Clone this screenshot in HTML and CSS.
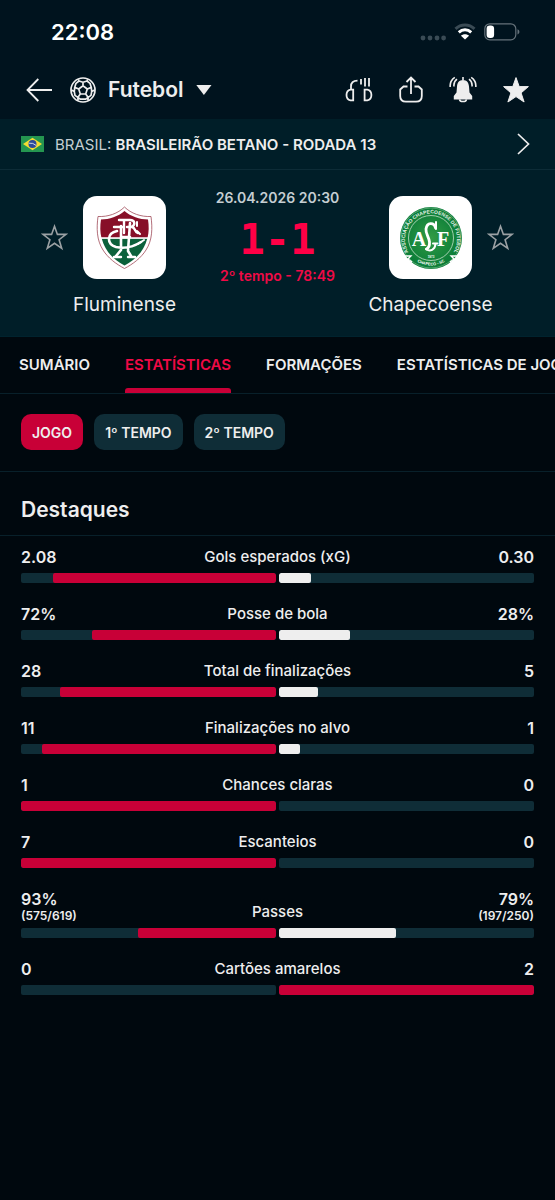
FILE: index.html
```html
<!DOCTYPE html>
<html lang="pt-BR">
<head>
<meta charset="utf-8">
<meta name="viewport" content="width=device-width, initial-scale=1">
<title>Fluminense - Chapecoense</title>
<link rel="stylesheet" href="styles.css">
</head>
<body>
<div class="top">
  <div class="status-bar">
    <span class="clock">22:08</span>
    <div class="status-icons">
      <svg width="26" height="6" viewBox="0 0 26 6" fill="#3a4b55"><circle cx="3" cy="3" r="2.4"/><circle cx="10" cy="3" r="2.4"/><circle cx="17" cy="3" r="2.4"/><circle cx="23.6" cy="3" r="2.4"/></svg>
      <svg class="wifi" width="22" height="17" viewBox="0 0 22 17" fill="none" stroke-width="3"><path d="M1.500 5.800C7 .6 15 .6 20.500 5.800" stroke="#3a4b55"/><path d="M4.800 9.300C8.400 6 13.600 6 17.200 9.300" stroke="#fff"/><path d="M7 12.800C9 10.800 13 10.800 15 12.800L11 16.500Z" fill="#fff"/></svg>
      <svg width="36" height="18" viewBox="0 0 36 18"><rect x=".8" y=".8" width="31" height="16" rx="5" fill="none" stroke="#65727a" stroke-width="1.200"/><rect x="2.600" y="2.600" width="7.500" height="12.400" rx="3.200" fill="#fff"/><path d="M33.500 6.300C36 7.300 36 10.500 33.500 11.500Z" fill="#65727a"/></svg>
    </div>
  </div>
  <header class="app-bar">
    <button class="icon-button" aria-label="Voltar"><svg width="26" height="24" viewBox="0 0 26 24" fill="none" stroke="#eee" stroke-width="1.800"><path d="M12.300 1 1.500 12l10.800 11M1.500 12H26"/></svg></button>
    <button class="sport">
      <svg width="26" height="26" viewBox="0 0 26 26" fill="none" stroke="#eee" stroke-width="1.700" stroke-linejoin="round"><circle cx="13" cy="13" r="12"/><path d="M13 8.800 17.300 12 15.700 17h-5.400L8.700 12ZM13 8.800V5M17.300 12l4-1.600M15.700 17l2.500 3.400M10.300 17l-2.500 3.400M8.700 12l-4-1.600M8.300 2.200 9 4l4 1.200L17 4l.7-1.800M21.300 10.400 20 6.300 17 4M21.300 10.400l.4 4.200 3-1.600M18.200 20.400l2.800-2 .7-3.800M18.200 20.400l-.3 3.300M18.200 20.400 15.500 22.200h-5L7.800 20.400M7.800 20.400 5 18.400l-.7-3.800M7.800 20.400l.3 3.300M4.700 10.400l-.4 4.200-3-1.600M4.700 10.400 6 6.300 9 4"/></svg>
      <span>Futebol</span>
      <svg width="16" height="10" viewBox="0 0 16 10" fill="#eee"><path d="M.3 0h15.200L7.900 10Z"/></svg>
    </button>
    <div class="actions">
      <button class="icon-button" aria-label="Áudio"><svg width="28" height="26" viewBox="0 0 28 26" fill="none" stroke="#eee" stroke-width="1.800"><path d="M8.200 12.600v10.700H5.500C3 22.800 1.500 20.500 1.500 18s1.500-4.900 4-5.400ZM19.600 12.600v10.700h2.700c2.600-.5 4.100-2.800 4.100-5.300s-1.500-4.900-4.100-5.400ZM6 12.600V9.500C6 6 8.200 3.700 12.500 3.700M16 2v5.500M20 1v8.500M24 1v8.500"/></svg></button>
      <button class="icon-button" aria-label="Compartilhar"><svg width="24" height="27" viewBox="0 0 24 27" fill="none" stroke="#eee" stroke-width="1.800"><path d="M8.500 10.500H4.500L1.200 13.500V20C1.200 23.500 3.500 25.700 7 25.700H17C20.500 25.700 22.800 23.500 22.800 20V13.500L19.500 10.500H15.500M12 18V2M7.500 6 12 1.500 16.500 6"/></svg></button>
      <button class="icon-button" aria-label="Notificações"><svg width="28" height="27" viewBox="0 0 28 27" fill="none" stroke="#eee" stroke-width="1.600"><path d="M14 1v3M10.500 23.300C10.900 26.300 17.100 26.300 17.500 23.300M5 10.500C4.600 7.500 5.500 5 8 3.200M1.200 11C.8 7 2.500 3.500 5.800 1.300M23 10.500C23.400 7.500 22.500 5 20 3.200M26.800 11C27.200 7 25.500 3.500 22.200 1.300"/><path d="M14 4C10.200 4 8.200 6.800 8 10.500L7.500 16.500 4.800 20V23.500H23.200V20L20.500 16.500 20 10.500C19.800 6.800 17.800 4 14 4Z" fill="#eee" stroke="none"/></svg></button>
      <button class="icon-button" aria-label="Favorito"><svg width="26" height="26" viewBox="0 0 26 26" fill="#eee" stroke="#eee" stroke-linejoin="round"><path d="M13 .6l3.200 9H25.400l-7.300 6.300 3 9.100L13 19.600 4.900 25l3-9.100L.6 9.600h9.200Z"/></svg></button>
    </div>
  </header>
</div>

<a class="league" href="#">
  <svg class="flag" width="23" height="16" viewBox="0 0 23 16"><path fill="#249650" d="M0 0h23v16H0z"/><path fill="#f5dc32" d="M11.500 1.800 21 8l-9.500 6.200L2 8Z"/><circle cx="11.500" cy="8" r="4" fill="#2b4a9b"/><path d="M7.800 7.200Q12 6.500 15.200 9.500" fill="none" stroke="#cdd8e4"/></svg>
  <span>BRASIL: <strong>BRASILEIRÃO BETANO - RODADA 13</strong></span>
  <svg class="chevron" width="13" height="22" viewBox="0 0 13 22" fill="none" stroke="#eee" stroke-width="1.700"><path d="M1 1l10.500 10L1 21"/></svg>
</a>

<section class="match">
  <button class="icon-button follow" aria-label="Seguir Fluminense"><svg width="27" height="27" viewBox="0 0 27 27" fill="none" stroke="#9ba1a4" stroke-width="1.600"><path d="M13.500 2.300 16.400 10.400H25L18.100 15.700 20.700 24.300 13.500 19.300 6.300 24.300 8.900 15.700 2 10.400H10.600Z"/></svg></button>
  <div class="team">
    <div class="crest">
      <svg width="57" height="64" viewBox="0 0 57 64">
        <path d="M28.500 1C22 7.500 12 11 2 10.500.5 22 .5 34 7 44c5 8 13 14 21.500 18.500C37 58 45 52 50 44c6.500-10 6.500-22 5-33.500C45 11 35 7.500 28.500 1Z" fill="#fff" stroke="#a04a58" stroke-width=".8"/>
        <path d="M28.500 5C22 10.500 13.500 13.500 5 13.500 4 20 4 26 5.500 32h46c1.500-6 1.500-12 .5-18.500C43.500 13.500 35 10.500 28.500 5Z" fill="#870f28"/>
        <path d="M5.700 32.500C9 45 17 53.500 28.500 59.500 40 53.500 48 45 51.300 32.500Z" fill="#0b613b"/>
        <path d="M5 32h47" stroke="#fff" stroke-width="1.400"/>
        <g fill="none" stroke="#fff" stroke-width="2.600" stroke-linecap="round" stroke-linejoin="round"><path d="M21 25C11 27 10 38 20 41c9 2 17 0 25-5M25 20v24l-5 6M34 17l-2 28 3 5M25 31h9"/><path d="M23 14h11c5 0 6 5 1 7h-4M36 21c4 1 2 5 6 6M18 21h8M18 51h7M32 51h7M28 15v12" stroke-width="2.400"/><path d="M41 16v4M41 25l3 3M42 38l6-4" stroke-width="2"/></g>
      </svg>
    </div>
    <span class="team-name">Fluminense</span>
  </div>
  <div class="result">
    <time class="kickoff" datetime="2026-04-26T20:30">26.04.2026 20:30</time>
    <div class="score">1-1</div>
    <div class="period">2º tempo - 78:49</div>
  </div>
  <div class="team">
    <div class="crest">
      <svg width="64" height="64" viewBox="0 0 64 64">
        <defs><path id="ring" d="M10.500 48A26 26 0 1 1 53.500 48"/><path id="foot" d="M17 55Q32 64 47 55"/><radialGradient id="green"><stop offset="0" stop-color="#329b45"/><stop offset="1" stop-color="#087b37"/></radialGradient></defs>
        <circle cx="32" cy="32" r="31" fill="url(#green)"/>
        <circle cx="32" cy="32" r="22.500" fill="none" stroke="#c4dfc9" stroke-width=".8"/>
        <circle cx="32" cy="32" r="30" fill="none" stroke="#9acda4" stroke-width=".5"/>
        <path d="M3 50l9 0-3 3 4 3M61 50l-9 0 3 3-4 3" fill="none" stroke="#fff" stroke-width="1.300"/>
        <text class="crest-ring"><textPath href="#ring" startOffset="50%" text-anchor="middle">ASSOCIAÇÃO CHAPECOENSE DE FUTEBOL</textPath></text>
        <text class="crest-foot"><textPath href="#foot" startOffset="50%" text-anchor="middle">CHAPECÓ - SC</textPath></text>
        <text class="crest-year" x="32" y="52" text-anchor="middle">1973</text>
        <text class="crest-letter" x="20" y="40" text-anchor="middle">A</text>
        <text class="crest-letter" x="44" y="40" text-anchor="middle">F</text>
        <g fill="none" stroke="#fff" stroke-linecap="round"><path d="M36.500 22C35 16 28 16 27 23c-.5 5 3 8 3.500 13 .3 4-1 6-3 7" stroke-width="2.800"/><path d="M37 16v7M27 43c4 3 9 1 9.500-5M34 37.500h4.500" stroke-width="2"/></g>
      </svg>
    </div>
    <span class="team-name">Chapecoense</span>
  </div>
  <button class="icon-button follow" aria-label="Seguir Chapecoense"><svg width="27" height="27" viewBox="0 0 27 27" fill="none" stroke="#9ba1a4" stroke-width="1.600"><path d="M13.500 2.300 16.400 10.400H25L18.100 15.700 20.700 24.300 13.500 19.300 6.300 24.300 8.900 15.700 2 10.400H10.600Z"/></svg></button>
</section>

<nav class="tabs">
  <a class="tab" href="#">SUMÁRIO</a>
  <a class="tab tab-active" href="#">ESTATÍSTICAS</a>
  <a class="tab" href="#">FORMAÇÕES</a>
  <a class="tab" href="#">ESTATÍSTICAS DE JOGADORES</a>
</nav>

<div class="filters">
  <button class="chip chip-active">JOGO</button>
  <button class="chip">1º TEMPO</button>
  <button class="chip">2º TEMPO</button>
</div>

<main>
  <h2 class="section-title">Destaques</h2>
  <div class="stats">
    <div class="stat"><div class="stat-text"><b>2.08</b><span>Gols esperados (xG)</span><b>0.30</b></div><div class="bars"><div class="track home"><i class="fill lead" style="width:87.400%"></i></div><div class="track"><i class="fill" style="width:12.600%"></i></div></div></div>
    <div class="stat"><div class="stat-text"><b>72%</b><span>Posse de bola</span><b>28%</b></div><div class="bars"><div class="track home"><i class="fill lead" style="width:72%"></i></div><div class="track"><i class="fill" style="width:28%"></i></div></div></div>
    <div class="stat"><div class="stat-text"><b>28</b><span>Total de finalizações</span><b>5</b></div><div class="bars"><div class="track home"><i class="fill lead" style="width:84.800%"></i></div><div class="track"><i class="fill" style="width:15.200%"></i></div></div></div>
    <div class="stat"><div class="stat-text"><b>11</b><span>Finalizações no alvo</span><b>1</b></div><div class="bars"><div class="track home"><i class="fill lead" style="width:91.700%"></i></div><div class="track"><i class="fill" style="width:8.300%"></i></div></div></div>
    <div class="stat"><div class="stat-text"><b>1</b><span>Chances claras</span><b>0</b></div><div class="bars"><div class="track home"><i class="fill lead" style="width:100%"></i></div><div class="track"></div></div></div>
    <div class="stat"><div class="stat-text"><b>7</b><span>Escanteios</span><b>0</b></div><div class="bars"><div class="track home"><i class="fill lead" style="width:100%"></i></div><div class="track"></div></div></div>
    <div class="stat"><div class="stat-text"><b>93%<small>(575/619)</small></b><span>Passes</span><b>79%<small>(197/250)</small></b></div><div class="bars"><div class="track home"><i class="fill lead" style="width:54%"></i></div><div class="track"><i class="fill" style="width:46%"></i></div></div></div>
    <div class="stat"><div class="stat-text"><b>0</b><span>Cartões amarelos</span><b>2</b></div><div class="bars"><div class="track home"></div><div class="track"><i class="fill lead" style="width:100%"></i></div></div></div>
  </div>
</main>
</body>
</html>
```

FILE: styles.css
```css
* { box-sizing: border-box; }
body {
  margin: 0;
  min-height: 100vh;
  background: #00080e;
  color: #eee;
  font-family: Inter, "Liberation Sans", sans-serif;
  font-size: 16px;
  overflow-x: hidden;
}
button { font: inherit; color: inherit; background: none; border: 0; padding: 0; cursor: pointer; }
a { color: inherit; text-decoration: none; }
svg { display: block; flex: none; }

.top { background: #00131e; }
.status-bar { display: flex; justify-content: space-between; align-items: center; height: 60px; padding: 3px 35px 0 51px; }
.clock { font-size: 22px; font-weight: 600; color: #fff; }
.status-icons { display: flex; align-items: center; gap: 8px; }
.status-icons svg:first-child { margin-top: 12px; }

.app-bar { display: flex; align-items: center; height: 59px; padding: 0 26px; }
.icon-button { display: flex; align-items: center; justify-content: center; }
.sport { display: flex; align-items: center; gap: 12px; margin-left: 18px; font-size: 21px; font-weight: 600; }
.actions { display: flex; align-items: center; gap: 26px; margin-left: auto; }

.league { display: flex; align-items: center; gap: 11px; height: 51px; padding: 0 25px 0 21px; background: #001e28; border-bottom: 1px solid #0d2c37; color: #c5ced2; font-size: 15px; white-space: nowrap; }
.league strong { color: #eee; font-weight: 600; }
.chevron { margin-left: auto; }

.match { display: grid; grid-template-columns: 27px 83px 1fr 83px 27px; column-gap: 15px; align-items: start; padding: 17px 41px; background: #001e28; }
.follow { margin-top: 37px; }
.team { display: flex; flex-direction: column; align-items: center; gap: 12px; padding-top: 9px; }
.crest { display: flex; align-items: center; justify-content: center; width: 83px; height: 83px; border-radius: 14px; background: #fff; }
.team-name { font-size: 19px; line-height: 28px; white-space: nowrap; }
.result { display: flex; flex-direction: column; align-items: center; font-weight: 600; white-space: nowrap; }
.kickoff { color: #c5ced2; font-size: 14px; line-height: 22px; }
.score { padding-top: 6px; color: #ff0046; font-family: "DejaVu Sans Mono", monospace; font-size: 42px; font-weight: 700; line-height: 50px; }
.period { color: #f00a46; font-size: 14px; line-height: 22px; }
.crest-ring { font: 700 5px "Liberation Sans", sans-serif; fill: #e4f2e6; }
.crest-foot { font: 700 4px "Liberation Sans", sans-serif; fill: #fff; }
.crest-year { font: 700 3px "Liberation Sans", sans-serif; fill: #fff; }
.crest-letter { font: 700 20px "Liberation Serif", serif; fill: #fff; }

.tabs { display: flex; gap: 35px; height: 58px; padding: 0 19px; border-top: 1px solid #00232e; border-bottom: 1px solid #08202a; overflow: hidden; font-size: 15px; font-weight: 600; white-space: nowrap; }
.tab { display: flex; align-items: center; flex: none; border-bottom: 5px solid transparent; padding-top: 4px; }
.tab-active { position: relative; color: #f00a46; }
.tab-active::after { content: ""; position: absolute; left: 0; right: 0; bottom: -5px; height: 5px; border-radius: 3px 3px 0 0; background: #c80037; }

.filters { display: flex; gap: 11px; padding: 20px 21px 21px; border-bottom: 1px solid #08202a; }
.chip { height: 36px; padding: 0 11px; border-radius: 10px; background: #0f2d37; font-size: 14px; font-weight: 600; }
.chip-active { background: #c80037; }

.section-title { margin: 0; padding: 22px 21px 10px; border-bottom: 1px solid #08202a; font-size: 21px; font-weight: 600; line-height: 31px; }
.stats { display: grid; gap: 21px; padding: 11px 21px 24px; }
.stat-text { display: grid; grid-template-columns: 1fr auto 1fr; align-items: end; line-height: 20px; font-weight: 500; font-size: 15px; }
.stat-text b { font-size: 16px; font-weight: 600; }
.stat-text b:last-child { text-align: right; }
.stat-text small { display: block; font-size: 12px; line-height: 13px; }
.bars { display: grid; grid-template-columns: 1fr 1fr; gap: 3px; margin-top: 6px; }
.track { display: flex; height: 10px; border-radius: 2px; background: #0f2d37; overflow: hidden; }
.home { justify-content: flex-end; }
.fill { border-radius: 2px; background: #eee; }
.lead { background: #c80037; }
```
